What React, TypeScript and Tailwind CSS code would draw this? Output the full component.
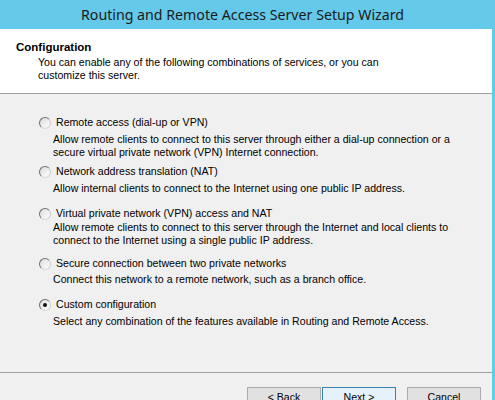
import React from "react";

const body = "[font-family:'Liberation_Sans',Arial,sans-serif]";

function Radio({ checked }: { checked?: boolean }) {
  return (
    <div className="w-[12px] h-[12px] rounded-full border border-t-[#6f6f6f] border-l-[#6f6f6f] border-r-[#c8c8c8] border-b-[#d8d8d8] bg-gradient-to-br from-[#dcdcdc] to-[#ffffff] flex items-center justify-center shrink-0">
      {checked && <div className="w-[4px] h-[4px] rounded-full bg-[#111111]" />}
    </div>
  );
}

function Option({
  label,
  desc,
  checked,
  mt,
  dmt,
}: {
  label: string;
  desc: string[];
  checked?: boolean;
  mt: string;
  dmt: string;
}) {
  return (
    <div className={mt}>
      <div className="flex items-center h-[13px] pl-[39px]">
        <Radio checked={checked} />
        <span className="ml-[5px] leading-[13px] whitespace-nowrap">{label}</span>
      </div>
      <div className={`${dmt} pl-[53px]`}>
        {desc.map((d, i) => (
          <div key={i} className="leading-[13px] whitespace-nowrap">
            {d}
          </div>
        ))}
      </div>
    </div>
  );
}

function Btn({ children, primary }: { children: React.ReactNode; primary?: boolean }) {
  return (
    <div
      className={`w-[74px] h-[23px] border ${
        primary ? "border-[#3c7fb1] bg-[#e5f1fb]" : "border-[#adadad] bg-[#e1e1e1]"
      } flex justify-center pt-[3px] leading-[13px] text-[10.6px] text-[#000000]`}
    >
      {children}
    </div>
  );
}

export default function App() {
  return (
    <div className={`w-[495px] h-[400px] overflow-hidden bg-[#65c9e9] flex flex-col ${body} text-[10.6px] text-[#000000]`}>
      <div className="h-[29px] shrink-0 flex items-center justify-center pr-[10px] text-[14.2px] text-[#1b1b1b] [font-family:'Noto_Sans',sans-serif] leading-[29px]">
        Routing and Remote Access Server Setup Wizard
      </div>
      <div className="mr-[3px] flex-1 flex flex-col">
        <div className="h-[65px] shrink-0 bg-[#ffffff] border-b border-[#a0a0a0] pt-[11px]">
          <div className="pl-[16px] text-[11.5px] font-bold leading-[14px]">Configuration</div>
          <div className="pl-[38px] mt-[2px] leading-[13px]">
            <div>You can enable any of the following combinations of services, or you can</div>
            <div>customize this server.</div>
          </div>
        </div>
        <div className="flex-1 bg-[#f0f0f0] flex flex-col">
          <div className="h-[279px] shrink-0 border-b border-[#a0a0a0]">
            <Option
              mt="mt-[22px]"
              dmt="mt-[4px]"
              label="Remote access (dial-up or VPN)"
              desc={[
                "Allow remote clients to connect to this server through either a dial-up connection or a",
                "secure virtual private network (VPN) Internet connection.",
              ]}
            />
            <Option
              mt="mt-[6px]"
              dmt="mt-[4px]"
              label="Network address translation (NAT)"
              desc={["Allow internal clients to connect to the Internet using one public IP address."]}
            />
            <Option
              mt="mt-[12px]"
              dmt="mt-[1px]"
              label="Virtual private network (VPN) access and NAT"
              desc={[
                "Allow remote clients to connect to this server through the Internet and local clients to",
                "connect to the Internet using a single public IP address.",
              ]}
            />
            <Option
              mt="mt-[10px]"
              dmt="mt-[3px]"
              label="Secure connection between two private networks"
              desc={["Connect this network to a remote network, such as a branch office."]}
            />
            <Option
              mt="mt-[12px]"
              dmt="mt-[4px]"
              checked
              label="Custom configuration"
              desc={["Select any combination of the features available in Routing and Remote Access."]}
            />
          </div>
          <div className="flex pt-[14px] pl-[247px]">
            <Btn>&lt; Back</Btn>
            <div className="ml-[1px]">
              <Btn primary>Next &gt;</Btn>
            </div>
            <div className="ml-[11px]">
              <Btn>Cancel</Btn>
            </div>
          </div>
        </div>
      </div>
    </div>
  );
}
